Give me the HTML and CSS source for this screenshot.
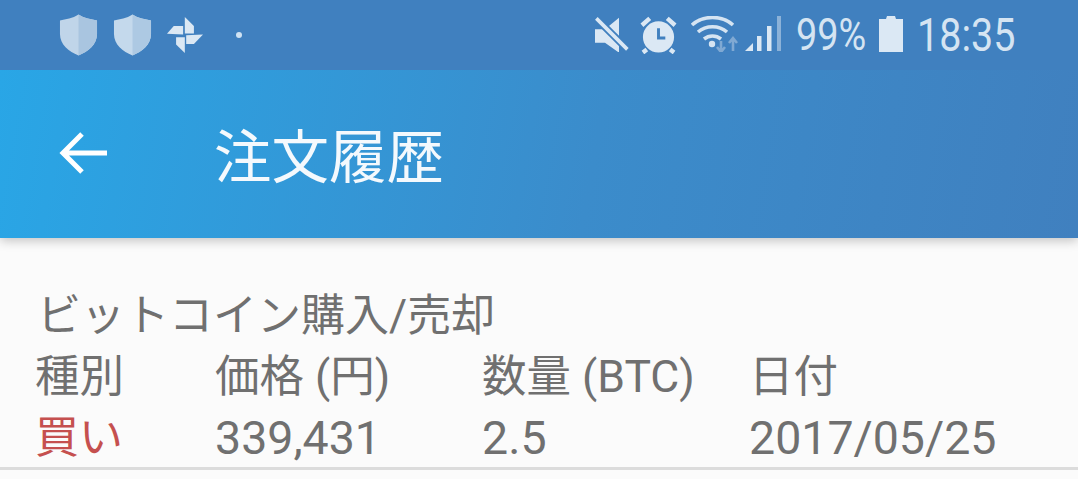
FILE: index.html
```html
<!DOCTYPE html>
<html lang="ja">
<head>
<meta charset="utf-8">
<title>注文履歴</title>
<link rel="stylesheet" href="styles.css">
</head>
<body>
<div class="status">
  <div class="status-left">
    <svg class="shield" viewBox="0 0 40 42"><path d="M20 0C14 4 7 5 1 6V20C1 31 10 38 20 42C30 38 39 31 39 20V6C33 5 26 4 20 0Z" fill="#c0d5e9"/><path d="M20 0C26 4 33 5 39 6V20C39 31 30 38 20 42Z" fill="#a9c5e0"/></svg>
    <svg class="shield" viewBox="0 0 40 42"><path d="M20 0C14 4 7 5 1 6V20C1 31 10 38 20 42C30 38 39 31 39 20V6C33 5 26 4 20 0Z" fill="#c4d9ec"/><path d="M20 0C26 4 33 5 39 6V20C39 31 30 38 20 42Z" fill="#adc9e3"/></svg>
    <svg class="pin" viewBox="385 48 107 107"><g fill="#dbe8f4"><path d="M438 48L465 75V97H438Z"/><path d="M492 100L465 128H442V102Z"/><path d="M438 155L412 130V108H438Z"/><path d="M385 98L405 75H433V100Z"/></g></svg>
    <span class="dot"></span>
  </div>
  <div class="status-right">
    <svg class="i-mute" viewBox="45 45 105 108"><path d="M48 85H78L120 50V155L78 125H48Z" fill="#dbe8f4"/><path d="M48 48L148 148" stroke="#4080bf" stroke-width="22"/><path d="M52 52L145 145" stroke="#dbe8f4" stroke-width="11"/></svg>
    <svg class="i-alarm" viewBox="0 0 38 38"><circle cx="19" cy="21" r="16" fill="#dbe8f4"/><path d="M19 12V22H26" fill="none" stroke="#4080bf" stroke-width="3"/><path d="M2 9L10 2M36 9L28 2M7 34L3 37M31 34L35 37" stroke="#dbe8f4" stroke-width="4.5"/></svg>
    <svg class="i-wifi" viewBox="0 0 50 36"><g fill="none" stroke="#d5e4f2" stroke-width="3.6"><path d="M1 9C12 -1 31 -1 42 9"/><path d="M7 16C15 9 28 9 36 16"/><path d="M13 23C18 19 25 19 30 23"/></g><circle cx="21" cy="28" r="3.2" fill="#d5e4f2"/><path d="M30 25V35M26 31L30 36L34 31" fill="none" stroke="#80a9d3" stroke-width="2.6"/><path d="M42 35V23M38 27L42 22L46 27" fill="none" stroke="#80a9d3" stroke-width="2.6"/></svg>
    <svg class="i-signal" viewBox="0 0 36 36"><path d="M0 35L8 27V35Z" fill="#dbe8f4"/><rect x="12" y="20" width="4.5" height="15" fill="#dbe8f4"/><rect x="22" y="10" width="4.5" height="25" fill="#dbe8f4"/><rect x="32" y="0" width="4" height="35" fill="#8cb2d8"/></svg>
    <span class="pct">99%</span>
    <svg class="i-batt" viewBox="0 0 24 36"><path d="M8 0H16L17 3H24V36H0V3H7Z" fill="#dbe8f4"/></svg>
    <span class="clock">18:35</span>
  </div>
</div>
<header class="appbar">
  <svg class="back" viewBox="0 0 50 44"><path d="M48 22H4M23 3L4 22L23 41" fill="none" stroke="#fff" stroke-width="5"/></svg>
  <h1 class="title">注文履歴</h1>
</header>
<main class="content">
  <div class="section-title">ビットコイン購入/売却</div>
  <div class="row labels">
    <span>種別</span><span>価格 (円)</span><span>数量 (BTC)</span><span>日付</span>
  </div>
  <div class="row values">
    <span class="buy">買い</span><span class="num">339,431</span><span class="num">2.5</span><span class="num">2017/05/25</span>
  </div>
  <div class="rule"></div>
</main>
</body>
</html>
```
FILE: styles.css
```css
* { box-sizing: border-box; }
html, body { margin: 0; height: 479px; overflow: hidden; }
body {
  background: #fbfbfb;
  font-family: Roboto, "Noto Sans CJK JP", sans-serif;
  display: flex;
  flex-direction: column;
}
.status {
  height: 70px;
  background: #4080bf;
  display: flex;
  justify-content: space-between;
  align-items: center;
  padding: 0 64px 0 59px;
  flex: none;
  position: relative;
  z-index: 1;
}
.status-left, .status-right { display: flex; align-items: center; }
.shield { width: 39px; height: 42px; margin-right: 15px; }
.pin { width: 36px; height: 36px; margin-left: 0; }
.dot { width: 6px; height: 6px; border-radius: 50%; background: #cfe2f3; margin-left: 33px; }
.i-mute { width: 35px; height: 36px; margin-top: -2px; }
.i-alarm { width: 37px; height: 38px; margin-left: 11px; margin-top: -1px; }
.i-wifi { width: 50px; height: 36px; margin-left: 14px; margin-top: -2px; }
.i-signal { width: 36px; height: 36px; margin-left: 4px; margin-top: -2px; }
.pct {
  display: block;
  width: 70px;
  margin-left: 15px;
  font-size: 44px;
  line-height: 50px;
  color: #d5e4f2;
  white-space: nowrap;
  transform: scaleX(0.86);
  transform-origin: left center;
}
.i-batt { width: 24px; height: 36px; margin-left: 13px; margin-top: -2px; }
.clock {
  display: block;
  width: 97px;
  margin-left: 14px;
  font-size: 47px;
  line-height: 50px;
  color: #d5e4f2;
  white-space: nowrap;
  transform: scaleX(0.84);
  transform-origin: left center;
}
.appbar {
  height: 168px;
  flex: none;
  background: linear-gradient(100deg, #29a6e6 0%, #3b8ccb 55%, #4080bf 100%);
  box-shadow: 0 3px 10px rgba(0, 0, 0, 0.22);
  display: flex;
  align-items: center;
  color: #fff;
  padding-left: 59px;
  position: relative;
}
.back { width: 50px; height: 44px; margin-top: -2px; }
.title { font-size: 57.5px; font-weight: 400; margin: 10px 0 0 105px; line-height: 1; color: #f4f9fd; }
.content { padding-top: 53px; color: #707070; }
.section-title { font-size: 44px; line-height: 50px; padding-left: 37px; }
.row {
  display: grid;
  grid-template-columns: 180px 267px 267px 1fr;
  padding-left: 35px;
}
.labels { font-size: 44.5px; line-height: 62px; margin-top: 5px; }
.values { font-size: 46.5px; line-height: 62px; margin-top: -1px; }
.buy { color: #c5504f; font-size: 44px; }
.rule { height: 3px; background: #dcdcdc; margin-top: -2px; }
```
